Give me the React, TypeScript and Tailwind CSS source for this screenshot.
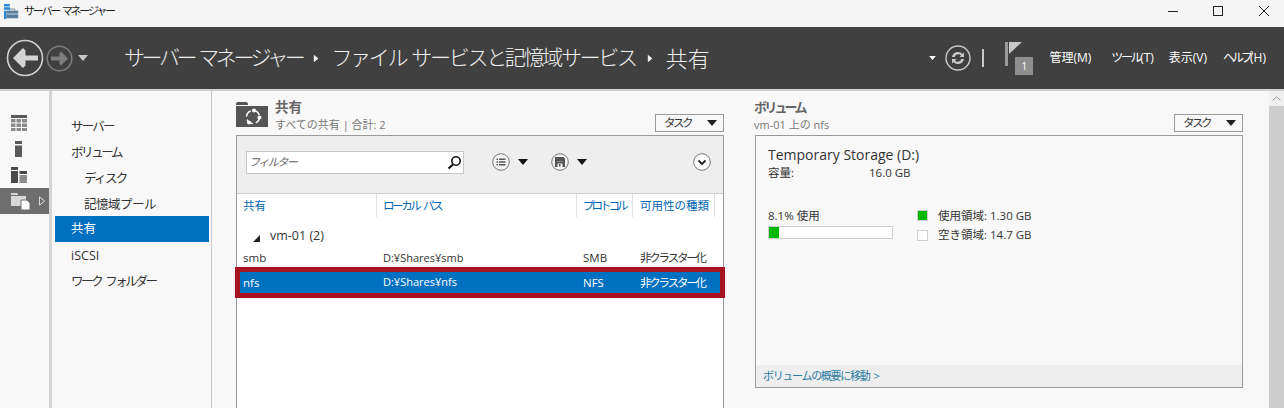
import React from 'react';

const jp = 'font-["Open_Sans","Noto_Sans_CJK_JP",sans-serif]';

const Caret = ({ className = '' }: { className?: string }) => (
  <svg width="10" height="6" viewBox="0 0 10 6" className={className}>
    <path d="M0 0h10L5 6z" fill="currentColor" />
  </svg>
);

const BackIcon = () => (
  <svg width="38" height="38" viewBox="0 0 38 38" className="shrink-0">
    <circle cx="19" cy="19" r="17.5" fill="none" stroke="#cfcfcf" strokeWidth="1.6" />
    <path d="M32 16.5H19.5V11.5L17 9 7 19l10 10 2.5-2.500v-5H32z" fill="#d4d4d4" />
  </svg>
);

const ForwardIcon = () => (
  <svg width="27" height="27" viewBox="0 0 27 27" className="shrink-0">
    <circle cx="13.500" cy="13.500" r="12.300" fill="none" stroke="#7d7d7d" strokeWidth="1.500" />
    <path d="M5 11.500h8.500V8l1.500-1.500 7 7-7 7-1.500-1.500v-3.500H5z" fill="#7d7d7d" />
  </svg>
);

const AppIcon = () => (
  <svg width="15" height="15" viewBox="0 0 18 18">
    <path d="M0 0h7v3H0zM0 4h7v3H0zM0 8h3v10H0z" fill="#2b88d8" />
    <path d="M3 17h15v1H3z" fill="#dfe6ec" />
    <rect x="3" y="8" width="14" height="9" fill="#5b7f99" />
    <path d="M7 8V6h6v2" fill="none" stroke="#5b7f99" />
    <path d="M3 12h14" stroke="#cfe0ec" />
  </svg>
);

const RefreshIcon = () => (
  <svg width="26" height="26" viewBox="0 0 26 26">
    <circle cx="13" cy="13" r="12" fill="none" stroke="#c8c8c8" strokeWidth="1.400" />
    <path d="M7 12c.6-3.200 3-5 6-5 2 0 3.400.8 4.500 2l1.500-1.500V12h-4.500l1.500-1.500c-.700-.900-1.600-1.300-2.700-1.300-1.700 0-3 1-3.500 2.800z" fill="#c8c8c8" />
    <path d="M19 14c-.6 3.200-3 5-6 5-2 0-3.400-.8-4.500-2L7 18.500V14h4.500L10 15.500c.7.900 1.600 1.300 2.700 1.300 1.700 0 3-1 3.500-2.800z" fill="#c8c8c8" />
  </svg>
);

const TableIcon = () => (
  <svg width="16" height="16" viewBox="0 0 16 16">
    <path d="M0 0h16v3H0z" fill="#5a5a5a" />
    <path d="M0 4h4.500v3.500H0zM5.500 4H10v3.500H5.500zM11 4h5v3.500h-5zM0 8.500h4.500V12H0zM5.500 8.500H10V12H5.500zM11 8.500h5V12h-5zM0 13h4.500v3H0zM5.500 13H10v3H5.500zM11 13h5v3h-5z" fill="#8a8a8a" />
  </svg>
);

const ServerIcon = () => (
  <svg width="8" height="16" viewBox="0 0 8 16">
    <path d="M0 0h7v3H0z" fill="#5a5a5a" />
    <path d="M0 4.500h7V16H0z" fill="#5a5a5a" />
  </svg>
);

const GroupIcon = () => (
  <svg width="16" height="16" viewBox="0 0 16 16">
    <path d="M0 0h7v3H0zM0 4h7v12H0z" fill="#4a4a4a" />
    <path d="M8.500 4H16v3H8.500z" fill="#4a4a4a" />
    <path d="M8.500 8H16v8H8.500z" fill="#8a8a8a" />
  </svg>
);

const FilesIcon = () => (
  <svg width="20" height="17" viewBox="0 0 20 17">
    <path d="M0 2V0h6l1.500 2z" fill="#d8d8d8" />
    <path d="M0 3h15v10H0z" fill="#d8d8d8" />
    <path d="M10 7h6l3 3v7h-9z" fill="#fff" stroke="#6f6f6f" />
  </svg>
);

const ShareIcon = () => (
  <svg width="32" height="26" viewBox="0 0 32 26">
    <path d="M0 3a2 2 0 0 1 2-2h8a2 2 0 0 1 2 2v1h-12z" fill="#555" />
    <path d="M0 5h32v21H0z" fill="#555" />
    <circle cx="17" cy="16" r="6.500" fill="none" stroke="#fff" strokeWidth="1.500" strokeDasharray="7 3.200" />
    <circle cx="18" cy="9.500" r="2" fill="#fff" />
    <circle cx="23.500" cy="16.500" r="2" fill="#fff" />
    <circle cx="13" cy="21.500" r="2" fill="#fff" />
  </svg>
);

const SearchIcon = () => (
  <svg width="15" height="15" viewBox="0 0 15 15">
    <circle cx="9" cy="6" r="4.200" fill="none" stroke="#111" strokeWidth="1.600" />
    <path d="M6 9.500 1.500 13.500" stroke="#111" strokeWidth="2.200" />
  </svg>
);

const ListCircle = () => (
  <svg width="18" height="18" viewBox="0 0 18 18">
    <circle cx="9" cy="9" r="8.300" fill="#f4f4f4" stroke="#777" />
    <path d="M4.500 5.500h1.500V7H4.500zM4.500 8.200h1.500v1.500H4.500zM4.500 11h1.500v1.500H4.500zM7 5.500h6.500V7H7zM7 8.200h6.500v1.500H7zM7 11h6.500v1.500H7z" fill="#555" />
  </svg>
);

const SaveCircle = () => (
  <svg width="18" height="18" viewBox="0 0 18 18">
    <circle cx="9" cy="9" r="8.300" fill="#f4f4f4" stroke="#777" />
    <path d="M4 4h8.500L14 5.500V14H4z" fill="#555" />
    <path d="M6 8h6v1H6z" fill="#8a8a8a" />
    <path d="M6.500 10.500h5V14h-5z" fill="#f4f4f4" />
    <path d="M8 11h1.500v2.500H8z" fill="#555" />
  </svg>
);

const ChevronCircle = () => (
  <svg width="18" height="18" viewBox="0 0 18 18">
    <circle cx="9" cy="9" r="8.300" fill="#fff" stroke="#777" />
    <path d="M5.500 7.500 9 11l3.500-3.500" fill="none" stroke="#222" strokeWidth="1.800" />
  </svg>
);

const TaskButton = () => (
  <div className="flex h-[18px] w-[69px] items-center justify-between border border-[#9a9a9a] pl-[8px] pr-[6px] text-[11.500px] tracking-[-2.500px] text-[#333]">
    <span>タスク</span>
    <Caret className="text-[#222]" />
  </div>
);

const navItems = [
  { label: 'サーバー', cls: 'flex h-[26px] items-center pl-[16px] pt-[5px] text-[12.500px] tracking-[-1.800px] text-[#333]' },
  { label: 'ボリューム', cls: 'flex h-[26px] items-center pl-[16px] pt-[5px] text-[12.500px] tracking-[-2.400px] text-[#333]' },
  { label: 'ディスク', cls: 'flex h-[26px] items-center pl-[29px] pt-[5px] text-[12.500px] tracking-[-1.600px] text-[#333]' },
  { label: '記憶域プール', cls: 'flex h-[26px] items-center pl-[29px] pt-[5px] text-[12.500px] tracking-[-0.500px] text-[#333]' },
  { label: '共有', cls: 'flex h-[26px] w-[154px] items-center bg-[#0070c0] pl-[16px] pt-[1px] text-[12.500px] text-white' },
  { label: 'iSCSI', cls: 'flex h-[26px] items-center pl-[16px] pt-[3px] text-[12.500px] text-[#333]' },
  { label: 'ワーク フォルダー', cls: 'flex h-[26px] items-center pl-[16px] pt-[3px] text-[12.500px] tracking-[-2.400px] [word-spacing:3px] text-[#333]' },
];

const Row = ({ name, path, proto, selected }: { name: string; path: string; proto: string; selected?: boolean }) => (
  <div
    className={
      selected
        ? 'relative -mx-[2px] flex h-[31px] items-center whitespace-nowrap border-[5px] border-[#a81321] bg-[#0070c0] text-[11.500px] text-white'
        : 'flex h-[20px] items-center whitespace-nowrap pt-[2px] text-[11.500px] text-[#333]'
    }
  >
    <div className={selected ? 'w-[143px] pl-[3px]' : 'w-[146px] pl-[6px]'}>{name}</div>
    <div className="w-[200px] text-[11px]">{path}</div>
    <div className="w-[57px]">{proto}</div>
    <div className="tracking-[-2.200px]">非クラスター化</div>
  </div>
);

export default function App() {
  return (
    <div className={`flex h-[408px] w-[1284px] flex-col overflow-hidden bg-[#f8f8f8] ${jp}`}>
      {/* title bar */}
      <div className="flex h-[27px] shrink-0 items-start bg-[#f5f5f5] pt-[4px]">
        <div className="ml-[4px]"><AppIcon /></div>
        <span className="ml-[5px] text-[11px] leading-[14px] tracking-[-2.200px] [word-spacing:2px] text-[#222]">サーバー マネージャー</span>
        <div className="ml-auto flex h-[14px] items-center">
          <div className="h-[1px] w-[10px] bg-[#222]" />
          <div className="ml-[35px] h-[10px] w-[10px] border border-[#222]" />
          <svg width="10" height="10" viewBox="0 0 10 10" className="ml-[36px] mr-[15px]">
            <path d="M0 0l10 10M10 0 0 10" stroke="#222" />
          </svg>
        </div>
      </div>

      {/* header */}
      <div className="flex h-[62px] shrink-0 items-center bg-[#404040] pl-[6px] text-white">
        <BackIcon />
        <div className="ml-[2px]"><ForwardIcon /></div>
        <Caret className="ml-[5px] text-[#c8c8c8]" />
        <div className="ml-[36px] flex items-center whitespace-nowrap text-[21px] font-light text-[#f0f0f0]">
          <span className="tracking-[-3.400px] [word-spacing:2px]">サーバー マネージャー</span>
          <Caret className="ml-[10px] mr-[11px] h-[5px] w-[8px] -rotate-90 text-[#eee]" />
          <span className="tracking-[-2.300px] [word-spacing:2px]">ファイル サービスと記憶域サービス</span>
          <Caret className="ml-[10px] mr-[12px] h-[5px] w-[8px] -rotate-90 text-[#eee]" />
          <span className="text-[22px]">共有</span>
        </div>
        <div className="ml-auto flex items-center whitespace-nowrap">
          <Caret className="mr-[9px] h-[4px] w-[7px] text-white" />
          <RefreshIcon />
          <div className="ml-[11px] h-[18px] w-[2px] bg-[#c8c8c8]" />
          <div className="relative ml-[21px] mr-[16px] h-[34px] w-[28px]">
            <svg width="18" height="26" viewBox="0 0 18 26">
              <path d="M0 1h3v24H0z" fill="#9a9a9a" />
              <path d="M4 1h13L4 13z" fill="#c8c8c8" />
            </svg>
            <div className="absolute bottom-0 right-0 flex h-[18px] w-[18px] items-center justify-center bg-[#8f8f8f] text-[10px]">1</div>
          </div>
          <span className="mr-[20px] text-[12px]">管理(M)</span>
          <span className="mr-[15px] text-[12px]"><span className="tracking-[-2.400px]">ツール</span>(T)</span>
          <span className="mr-[16px] text-[12px]">表示(V)</span>
          <span className="mr-[18px] text-[12px]"><span className="tracking-[-3px]">ヘルプ</span>(H)</span>
        </div>
      </div>

      {/* main area */}
      <div className="flex min-h-0 flex-1 border-t-2 border-[#cfcfcf]">
        {/* icon rail */}
        <div className="flex w-[52px] shrink-0 flex-col border-r-[3px] border-[#d4d4d4] bg-[#f8f8f8] pt-[19px]">
          <div className="flex h-[26px] items-center pl-[11px]"><TableIcon /></div>
          <div className="flex h-[26px] items-center pl-[15px]"><ServerIcon /></div>
          <div className="flex h-[26px] items-center pl-[11px]"><GroupIcon /></div>
          <div className="flex h-[26px] items-center bg-[#6e6e6e] pl-[11px]">
            <FilesIcon />
            <svg width="6" height="10" viewBox="0 0 6 10" className="ml-[8px]">
              <path d="M.5.800 5.500 5 .5 9.200z" fill="none" stroke="#ddd" />
            </svg>
          </div>
        </div>

        {/* nav */}
        <div className="w-[160px] shrink-0 border-r border-[#c8c8c8] pl-[3px] pt-[21px] pr-[2px]">
          {navItems.map((item) => (
            <div key={item.label} className={item.cls}>
              {item.label}
            </div>
          ))}
        </div>

        {/* shares */}
        <div className="ml-[24px] flex w-[488px] shrink-0 flex-col pt-[8px]">
          <div className="flex h-[36px] shrink-0 items-start">
            <div className="mt-[2px]"><ShareIcon /></div>
            <div className="ml-[7px] flex-1">
              <div className="mb-[2px] text-[13.500px] font-semibold leading-[16px] text-[#666]">共有</div>
              <div className="text-[11px] leading-[15px] text-[#777]">すべての共有 | 合計: 2</div>
            </div>
            <div className="mt-[15px]"><TaskButton /></div>
          </div>
          <div className="flex flex-1 flex-col border-x border-t border-[#9a9a9a] bg-white">
            <div className="flex h-[58px] shrink-0 items-center border-b border-[#cfcfcf] bg-[#eeeeee] pb-[5px] pl-[9px] pr-[12px]">
              <div className="flex h-[23px] w-[218px] items-center justify-between border border-[#c8c8c8] bg-white pl-[2px] pr-[1px]">
                <span className="text-[11px] italic tracking-[-1.500px] text-[#666]">フィルター</span>
                <SearchIcon />
              </div>
              <div className="ml-[28px]"><ListCircle /></div>
              <Caret className="ml-[8px] text-[#111]" />
              <div className="ml-[23px]"><SaveCircle /></div>
              <Caret className="ml-[8px] text-[#111]" />
              <div className="ml-auto"><ChevronCircle /></div>
            </div>
            <div className="flex h-[23px] shrink-0 items-center whitespace-nowrap text-[11.500px] text-[#0066b3]">
              <div className="h-full w-[140px] border-r border-[#e0e0e0] pl-[6px] leading-[23px]">共有</div>
              <div className="h-full w-[200px] border-r border-[#e0e0e0] pl-[6px] leading-[23px] tracking-[-2.400px] [word-spacing:3px]">ローカル パス</div>
              <div className="h-full w-[56px] border-r border-[#e0e0e0] pl-[6px] leading-[23px] tracking-[-3px]">プロトコル</div>
              <div className="h-full w-[82px] border-r border-[#e0e0e0] pl-[7px] leading-[23px]">可用性の種類</div>
            </div>
            <div className="flex h-[30px] shrink-0 items-end pb-[1px] pl-[16px] text-[12.500px] text-[#333]">
              <svg width="7" height="7" viewBox="0 0 7 7" className="mb-[4px]">
                <path d="M7 0v7H0z" fill="#222" />
              </svg>
              <span className="ml-[10px]">vm-01 (2)</span>
            </div>
            <Row name="smb" path="D:¥Shares¥smb" proto="SMB" />
            <Row name="nfs" path="D:¥Shares¥nfs" proto="NFS" selected />
          </div>
        </div>

        {/* volume */}
        <div className="ml-[31px] flex w-[488px] shrink-0 flex-col pb-[20px] pt-[8px]">
          <div className="flex h-[36px] shrink-0 items-start justify-between">
            <div className="-ml-[1px]">
              <div className="mb-[2px] text-[13px] font-semibold leading-[16px] tracking-[-2.800px] text-[#666]">ボリューム</div>
              <div className="text-[11px] leading-[15px] text-[#777]">vm-01 上の nfs</div>
            </div>
            <div className="mt-[15px]"><TaskButton /></div>
          </div>
          <div className="flex flex-1 flex-col border border-[#9a9a9a]">
            <div className="flex-1 pl-[12px] pt-[10px] text-[#333]">
              <div className="text-[14px] leading-[18px]">Temporary Storage (D:)</div>
              <div className="flex text-[11.500px] leading-[17px]">
                <span className="w-[101px]">容量:</span>
                <span>16.0 GB</span>
              </div>
              <div className="mt-[26px] flex">
                <div className="w-[149px]">
                  <div className="text-[11.500px] leading-[17px]">8.1% 使用</div>
                  <div className="mt-[2px] h-[13px] w-[125px] border border-[#cfcfcf] bg-white">
                    <div className="h-full w-[10px] bg-[#00b800]" />
                  </div>
                </div>
                <div className="-mt-[1px] text-[11.500px]">
                  <div className="flex h-[19px] items-center">
                    <div className="h-[11px] w-[11px] border border-[#cfcfcf] bg-[#00b800]" />
                    <span className="ml-[10px]">使用領域: 1.30 GB</span>
                  </div>
                  <div className="flex h-[20px] items-center">
                    <div className="h-[11px] w-[11px] border border-[#cfcfcf] bg-white" />
                    <span className="ml-[10px]">空き領域: 14.7 GB</span>
                  </div>
                </div>
              </div>
            </div>
            <div className="flex h-[22px] items-center bg-[#eeeeee] pl-[7px] text-[11px] tracking-[-1.300px] text-[#2b7a9e]">
              ボリュームの概要に移動 <span className="ml-[4px]">&gt;</span>
            </div>
          </div>
        </div>

        {/* scrollbar */}
        <div className="ml-auto flex w-[15px] shrink-0 flex-col bg-[#cdcdcd]">
          <div className="flex h-[15px] items-center justify-center bg-[#f0f0f0]">
            <svg width="9" height="5" viewBox="0 0 9 5">
              <path d="M.5 4.500 4.500.8l4 3.700" fill="none" stroke="#a0a0a0" />
            </svg>
          </div>
        </div>
      </div>
    </div>
  );
}
